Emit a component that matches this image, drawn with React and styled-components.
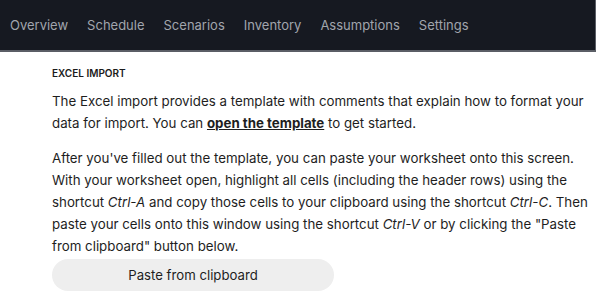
import React from "react";
import styled, { createGlobalStyle } from "styled-components";

const GlobalStyle = createGlobalStyle`
  body {
    margin: 0;
    background: #ffffff;
    font-family: Inter, "Noto Sans", sans-serif;
  }
`;

const tabs = ["Overview", "Schedule", "Scenarios", "Inventory", "Assumptions", "Settings"];

const App = () => {
  return (
    <>
      <GlobalStyle />
      <NavBar>
        {tabs.map((tab) => (
          <NavItem key={tab}>{tab}</NavItem>
        ))}
      </NavBar>

      <Content>
        <Heading>Excel import</Heading>
        <Paragraph>
          The Excel import provides a template with comments that explain how to format your data
          for import. You can <TemplateLink href="#">open the template</TemplateLink> to get
          started.
        </Paragraph>
        <Paragraph $tight>
          After you've filled out the template, you can paste your worksheet onto this screen. With
          your worksheet open, highlight all cells (including the header rows) using the shortcut{" "}
          <em>Ctrl-A</em> and copy those cells to your clipboard using the shortcut <em>Ctrl-C</em>.
          Then paste your cells onto this window using the shortcut <em>Ctrl-V</em> or by clicking
          the "Paste from clipboard" button below.
        </Paragraph>
        <PasteButton>Paste from clipboard</PasteButton>
      </Content>
    </>
  );
};

const NavBar = styled.nav`
  display: flex;
  align-items: center;
  gap: 19px;
  height: 50px;
  padding: 0 10px;
  background: #161921;
  border-bottom: 2px solid #5b5e66;
  border-right: 1px solid #5b5e66;
`;

const NavItem = styled.span`
  font-size: 13px;
  color: #a1a5ad;
`;

const Content = styled.main`
  padding: 15px 4px 0 52px;
`;

const Heading = styled.h2`
  margin: 0 0 11px;
  font-size: 10px;
  font-weight: 600;
  text-transform: uppercase;
  color: #1b1b1b;
`;

const Paragraph = styled.p`
  margin: 0 0 ${(p) => (p.$tight ? "2px" : "13px")};
  font-size: 13.3px;
  line-height: 22px;
  color: #1e1e1e;

  em {
    font-style: italic;
  }
`;

const TemplateLink = styled.a`
  color: #1e1e1e;
  font-weight: 700;
  text-decoration: underline;
`;

const PasteButton = styled.button`
  display: block;
  width: 282px;
  height: 32px;
  border: none;
  border-radius: 16px;
  background: #eeeeee;
  font-family: Inter, "Noto Sans", sans-serif;
  font-size: 13.2px;
  color: #1e1e1e;
`;

export default App;
